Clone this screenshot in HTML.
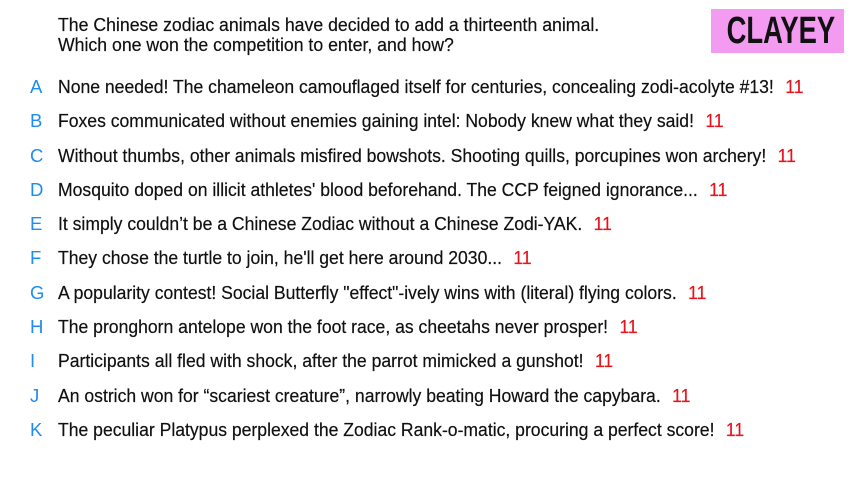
<!DOCTYPE html>
<html><head><meta charset="utf-8"><style>
body{margin:0;width:853px;height:480px;background:#fff;overflow:hidden;font-family:"Liberation Sans",sans-serif;color:#111;position:relative}
.q{position:absolute;left:58px;top:15px;font-size:18.5px;line-height:20px;transform:scaleX(0.955);transform-origin:left top;white-space:nowrap;-webkit-text-stroke:0.2px #111}
.tag{position:absolute;left:711px;top:9px;width:133px;height:44px;background:#f39bf0}
.tag span{position:absolute;left:-3px;width:133px;text-align:center;top:0;font-size:38px;font-weight:bold;line-height:44px;transform:scaleX(0.72);color:#111}
.r{position:absolute;left:0;height:24px;font-size:18.5px;line-height:24px;white-space:nowrap}
.l{position:absolute;left:30px;color:#1e8cf0}
.t{position:absolute;left:58px;transform:scaleX(0.95);transform-origin:left center;-webkit-text-stroke:0.2px #111}
.n{color:#e8141c;margin-left:12px;-webkit-text-stroke:0.2px #e8141c}
</style></head><body>
<div class="q">The Chinese zodiac animals have decided to add a thirteenth animal.<br>Which one won the competition to enter, and how?</div>
<div class="tag"><span>CLAYEY</span></div>
<div class="r" style="top:75px"><span class="l">A</span><span class="t">None needed! The chameleon camouflaged itself for centuries, concealing zodi-acolyte #13!<span class="n">11</span></span></div>
<div class="r" style="top:109px"><span class="l">B</span><span class="t">Foxes communicated without enemies gaining intel: Nobody knew what they said!<span class="n">11</span></span></div>
<div class="r" style="top:144px"><span class="l">C</span><span class="t">Without thumbs, other animals misfired bowshots. Shooting quills, porcupines won archery!<span class="n">11</span></span></div>
<div class="r" style="top:178px"><span class="l">D</span><span class="t">Mosquito doped on illicit athletes' blood beforehand. The CCP feigned ignorance...<span class="n">11</span></span></div>
<div class="r" style="top:212px"><span class="l">E</span><span class="t">It simply couldn’t be a Chinese Zodiac without a Chinese Zodi-YAK.<span class="n">11</span></span></div>
<div class="r" style="top:246px"><span class="l">F</span><span class="t">They chose the turtle to join, he'll get here around 2030...<span class="n">11</span></span></div>
<div class="r" style="top:281px"><span class="l">G</span><span class="t">A popularity contest! Social Butterfly "effect"-ively wins with (literal) flying colors.<span class="n">11</span></span></div>
<div class="r" style="top:315px"><span class="l">H</span><span class="t">The pronghorn antelope won the foot race, as cheetahs never prosper!<span class="n">11</span></span></div>
<div class="r" style="top:349px"><span class="l">I</span><span class="t">Participants all fled with shock, after the parrot mimicked a gunshot!<span class="n">11</span></span></div>
<div class="r" style="top:384px"><span class="l">J</span><span class="t">An ostrich won for “scariest creature”, narrowly beating Howard the capybara.<span class="n">11</span></span></div>
<div class="r" style="top:418px"><span class="l">K</span><span class="t">The peculiar Platypus perplexed the Zodiac Rank-o-matic, procuring a perfect score!<span class="n">11</span></span></div>
</body></html>
